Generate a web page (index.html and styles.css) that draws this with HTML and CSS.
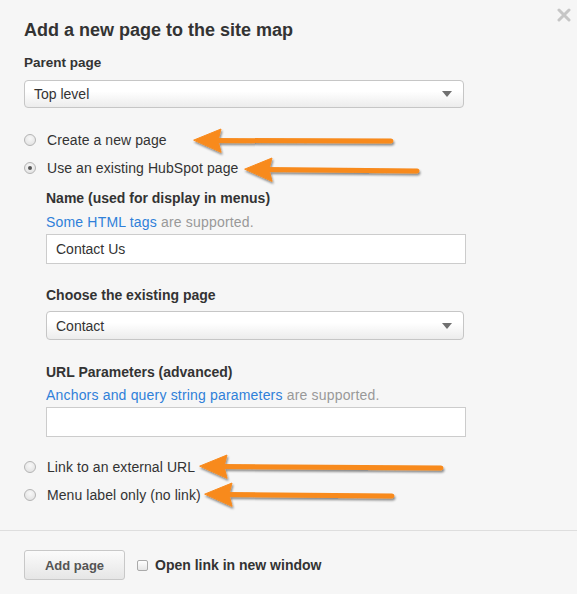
FILE: index.html
```html
<!DOCTYPE html>
<html>
<head>
<meta charset="utf-8">
<link rel="stylesheet" href="styles.css">
</head>
<body>
<div class="modal">
  <svg class="close" width="14" height="14" viewBox="0 0 14 14"><path d="M2 2 L12 12 M12 2 L2 12" stroke="#c6c6c6" stroke-width="3" stroke-linecap="round"/></svg>
  <div class="body">
    <h1 class="title">Add a new page to the site map</h1>
    <div class="label label-first">Parent page</div>
    <div class="select select-wide"><span>Top level</span><span class="caret"></span></div>

    <div class="radio radio-first"><span class="dot"></span><span>Create a new page</span></div>
    <div class="radio radio-next"><span class="dot checked"></span><span>Use an existing HubSpot page</span></div>

    <div class="sub">
      <div class="label label-name">Name (used for display in menus)</div>
      <div class="help help-name"><a class="link">Some HTML tags</a> are supported.</div>
      <div class="input">Contact Us</div>

      <div class="label label-gap">Choose the existing page</div>
      <div class="select select-sub"><span>Contact</span><span class="caret"></span></div>

      <div class="label label-gap2">URL Parameters (advanced)</div>
      <div class="help help-url"><a class="link">Anchors and query string parameters</a> are supported.</div>
      <div class="input"></div>
    </div>

    <div class="radio radio-third"><span class="dot"></span><span>Link to an external URL</span></div>
    <div class="radio radio-next"><span class="dot"></span><span>Menu label only (no link)</span></div>
  </div>
  <div class="footer">
    <button class="btn">Add page</button>
    <label class="check"><span class="box"></span><span>Open link in new window</span></label>
  </div>

  <svg class="arrows" width="577" height="594" viewBox="0 0 577 594">
    <defs>
      <filter id="sh" x="-10%" y="-50%" width="120%" height="200%">
        <feDropShadow dx="1" dy="2" stdDeviation="1.2" flood-color="#000" flood-opacity="0.45"/>
      </filter>
    </defs>
    <g fill="#f88a1c" stroke="#f88a1c" stroke-linecap="round" filter="url(#sh)">
      <line x1="215" y1="140.5" x2="391" y2="141" stroke-width="5"/>
      <polygon points="194,140 221,129 218,140.5 221,152" stroke-width="1" stroke-linejoin="round"/>
      <line x1="266" y1="169.5" x2="417" y2="171" stroke-width="5"/>
      <polygon points="245,169 272,158 269,169.5 272,181" stroke-width="1" stroke-linejoin="round"/>
      <line x1="221" y1="466.5" x2="441" y2="468" stroke-width="5"/>
      <polygon points="200,466 227,455 224,466.5 227,478" stroke-width="1" stroke-linejoin="round"/>
      <line x1="226" y1="494.5" x2="392" y2="496" stroke-width="5"/>
      <polygon points="205,494 232,483 229,494.5 232,506" stroke-width="1" stroke-linejoin="round"/>
    </g>
  </svg>
</div>
</body>
</html>
```
FILE: styles.css
```css
* { box-sizing: border-box; }
html, body { margin: 0; padding: 0; }
body {
  background: #f6f6f6;
  font-family: "Liberation Sans", Arial, sans-serif;
  color: #333;
  width: 577px;
  height: 594px;
  overflow: hidden;
}
.modal { position: relative; width: 577px; height: 594px; }
.close {
  position: absolute;
  left: 557px;
  top: 8px;
}
.body { padding: 18px 24px 0 24px; }
.title {
  margin: 0;
  font-size: 18px;
  line-height: 24px;
  font-weight: bold;
  color: #333;
}
.label {
  font-size: 13.5px;
  line-height: 18px;
  font-weight: bold;
  color: #333;
}
.label-first { margin-top: 12px; }
.label-name, .label-gap, .label-gap2 { font-size: 14px; }
.label-name { margin-top: 11px; }
.label-gap { margin-top: 22px; }
.label-gap2 { margin-top: 23px; }
.select {
  display: flex;
  align-items: center;
  justify-content: space-between;
  height: 28px;
  border: 1px solid #c6c6c6;
  border-radius: 4px;
  background: linear-gradient(#ffffff 0%, #ffffff 40%, #ececec 100%);
  padding: 0 11px 0 9px;
  font-size: 14px;
  color: #333;
}
.select-wide { width: 440px; margin-top: 8px; }
.select-sub { width: 418px; height: 29px; margin-top: 7px; }
.caret {
  width: 0; height: 0;
  border-left: 5px solid transparent;
  border-right: 5px solid transparent;
  border-top: 6px solid #707070;
}
.radio {
  display: flex;
  align-items: center;
  height: 20px;
  font-size: 14px;
  letter-spacing: 0.08px;
  color: #333;
}
.radio-first { margin-top: 22px; }
.radio-next { margin-top: 8px; }
.radio-third { margin-top: 20px; }
.dot {
  width: 12px; height: 12px;
  border-radius: 50%;
  border: 1px solid #b4b4b4;
  background: radial-gradient(circle at 50% 35%, #f8f8f8 0%, #dedede 100%);
  margin-right: 11px;
  display: flex;
  align-items: center;
  justify-content: center;
}
.dot.checked::after {
  content: "";
  width: 4px; height: 4px;
  border-radius: 50%;
  background: #555;
}
.sub { padding-left: 22px; }
.help {
  font-size: 14px;
  line-height: 18px;
  letter-spacing: 0.18px;
  color: #999;
}
.help-name { margin-top: 6px; }
.help-url { margin-top: 5px; }
.link { color: #2f80d9; }
.input {
  width: 420px;
  height: 30px;
  margin-top: 3px;
  border: 1px solid #cccccc;
  background: #fff;
  font-size: 14px;
  line-height: 28px;
  padding-left: 9px;
  color: #333;
}
.footer {
  margin-top: 25px;
  border-top: 1px solid #dedede;
  padding: 19px 24px 0 24px;
  display: flex;
  align-items: center;
}
.btn {
  width: 101px;
  height: 30px;
  border: 1px solid #c8c8c8;
  border-radius: 3px;
  background: linear-gradient(#fbfbfb, #e6e6e6);
  font-family: "Liberation Sans", Arial, sans-serif;
  font-size: 13px;
  font-weight: bold;
  color: #555;
  padding: 0;
}
.check {
  display: flex;
  align-items: center;
  margin-left: 12px;
  font-size: 14px;
  font-weight: bold;
  color: #333;
}
.box {
  width: 11px; height: 11px;
  border: 1px solid #aaa;
  border-radius: 2px;
  background: linear-gradient(#fff, #e6e6e6);
  margin-right: 7px;
}
.arrows { position: absolute; left: 0; top: 0; pointer-events: none; }
```
